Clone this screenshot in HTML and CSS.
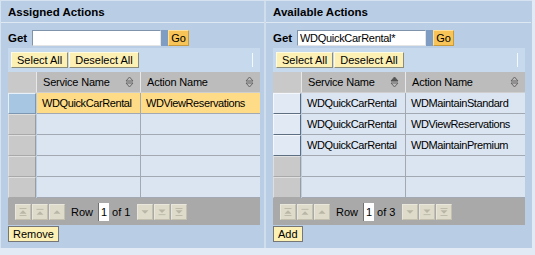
FILE: index.html
```html
<!DOCTYPE html>
<html lang="en">
<head>
    <meta charset="utf-8">
    <title>Service Actions</title>
    <link rel="stylesheet" href="styles.css">
</head>
<body>
<div class="frame">
    <div class="panel left">
        <div class="title">Assigned Actions</div>
        <div class="get">
            <span class="get-label">Get</span>
            <input class="get-input" type="text" value="">
            <span class="go-edge"></span>
            <button class="go">Go</button>
        </div>
        <div class="toolbar">
            <button class="btn">Select All</button>
            <button class="btn">Deselect All</button>
            <span class="tb-sep"></span>
        </div>
        <div class="grid">
            <div class="hd sel"></div>
            <div class="hd">Service Name <svg class="sort" viewBox="0 0 9 12"><path d="M1 5 L4.5 1 L8 5 Z" fill="none" stroke="#666"/><path d="M1 7 L4.5 11 L8 7 Z" fill="none" stroke="#666"/></svg></div>
            <div class="hd last">Action Name <svg class="sort" viewBox="0 0 9 12"><path d="M1 5 L4.5 1 L8 5 Z" fill="none" stroke="#666"/><path d="M1 7 L4.5 11 L8 7 Z" fill="none" stroke="#666"/></svg></div>

            <div class="sel picked"></div><div class="cell hi">WDQuickCarRental</div><div class="cell hi last">WDViewReservations</div>
            <div class="sel"></div><div class="cell"></div><div class="cell last"></div>
            <div class="sel"></div><div class="cell"></div><div class="cell last"></div>
            <div class="sel"></div><div class="cell"></div><div class="cell last"></div>
            <div class="sel"></div><div class="cell"></div><div class="cell last"></div>
        </div>
        <div class="pager">
            <span class="pbtn"><svg viewBox="0 0 16 16"><path d="M4 4h8M4 12h8" stroke="#b9b6a6"/><path d="M4 10 L8 6 L12 10 Z" fill="#b9b6a6"/></svg></span>
            <span class="pbtn"><svg viewBox="0 0 16 16"><path d="M4 5h8" stroke="#b9b6a6"/><path d="M4 11 L8 7 L12 11 Z" fill="#b9b6a6"/></svg></span>
            <span class="pbtn"><svg viewBox="0 0 16 16"><path d="M4 10 L8 6 L12 10 Z" fill="#b9b6a6"/></svg></span>
            <span class="row-label">Row</span>
            <span class="row-num">1</span>
            <span class="row-of">of 1</span>
            <span class="pbtn"><svg viewBox="0 0 16 16"><path d="M4 6 L8 10 L12 6 Z" fill="#b9b6a6"/></svg></span>
            <span class="pbtn"><svg viewBox="0 0 16 16"><path d="M4 11h8" stroke="#b9b6a6"/><path d="M4 5 L8 9 L12 5 Z" fill="#b9b6a6"/></svg></span>
            <span class="pbtn"><svg viewBox="0 0 16 16"><path d="M4 4h8M4 12h8" stroke="#b9b6a6"/><path d="M4 6 L8 10 L12 6 Z" fill="#b9b6a6"/></svg></span>
        </div>
        <button class="btn action">Remove</button>
    </div>

    <div class="panel right">
        <div class="title">Available Actions</div>
        <div class="get">
            <span class="get-label">Get</span>
            <input class="get-input" type="text" value="WDQuickCarRental*">
            <span class="go-edge"></span>
            <button class="go">Go</button>
        </div>
        <div class="toolbar">
            <button class="btn">Select All</button>
            <button class="btn">Deselect All</button>
            <span class="tb-sep"></span>
        </div>
        <div class="grid">
            <div class="hd sel"></div>
            <div class="hd">Service Name <svg class="sort" viewBox="0 0 9 12"><path d="M1 5 L4.5 1 L8 5 Z" fill="#555" stroke="#555"/><path d="M1 7 L4.5 11 L8 7 Z" fill="none" stroke="#666"/></svg></div>
            <div class="hd last">Action Name <svg class="sort" viewBox="0 0 9 12"><path d="M1 5 L4.5 1 L8 5 Z" fill="none" stroke="#666"/><path d="M1 7 L4.5 11 L8 7 Z" fill="none" stroke="#666"/></svg></div>

            <div class="sel live"></div><div class="cell">WDQuickCarRental</div><div class="cell last">WDMaintainStandard</div>
            <div class="sel live"></div><div class="cell">WDQuickCarRental</div><div class="cell last">WDViewReservations</div>
            <div class="sel live"></div><div class="cell">WDQuickCarRental</div><div class="cell last">WDMaintainPremium</div>
            <div class="sel"></div><div class="cell"></div><div class="cell last"></div>
            <div class="sel"></div><div class="cell"></div><div class="cell last"></div>
        </div>
        <div class="pager">
            <span class="pbtn"><svg viewBox="0 0 16 16"><path d="M4 4h8M4 12h8" stroke="#b9b6a6"/><path d="M4 10 L8 6 L12 10 Z" fill="#b9b6a6"/></svg></span>
            <span class="pbtn"><svg viewBox="0 0 16 16"><path d="M4 5h8" stroke="#b9b6a6"/><path d="M4 11 L8 7 L12 11 Z" fill="#b9b6a6"/></svg></span>
            <span class="pbtn"><svg viewBox="0 0 16 16"><path d="M4 10 L8 6 L12 10 Z" fill="#b9b6a6"/></svg></span>
            <span class="row-label">Row</span>
            <span class="row-num">1</span>
            <span class="row-of">of 3</span>
            <span class="pbtn"><svg viewBox="0 0 16 16"><path d="M4 6 L8 10 L12 6 Z" fill="#b9b6a6"/></svg></span>
            <span class="pbtn"><svg viewBox="0 0 16 16"><path d="M4 11h8" stroke="#b9b6a6"/><path d="M4 5 L8 9 L12 5 Z" fill="#b9b6a6"/></svg></span>
            <span class="pbtn"><svg viewBox="0 0 16 16"><path d="M4 4h8M4 12h8" stroke="#b9b6a6"/><path d="M4 6 L8 10 L12 6 Z" fill="#b9b6a6"/></svg></span>
        </div>
        <button class="btn action">Add</button>
    </div>
</div>
</body>
</html>
```

FILE: styles.css
```css
html, body {
    background-color: #e2ebf5;
}
body {
    margin: 0;
    padding: 0;
    font-family: "Liberation Sans", Arial, sans-serif;
    font-size: 11px;
    color: #000;
}
.frame {
    display: flex;
    width: 531px;
    height: 247px;
    background-color: #b9cde5;
    border-top: 1px solid #d6e2ef;
    border-left: 1px solid #d6e2ef;
}
.panel {
    display: flex;
    flex-direction: column;
    align-items: flex-start;
    padding: 0 0 0 7px;
}
.panel.left {
    width: 256px;
    border-right: 2px solid #cfdded;
}
.panel.right {
    width: 258px;
}
.title {
    align-self: stretch;
    height: 21px;
    line-height: 22px;
    margin-left: -7px;
    padding-left: 7px;
    font-weight: bold;
    font-size: 11.5px;
    border-bottom: 1px solid #dde8f3;
}
.get {
    display: flex;
    align-items: center;
    height: 16px;
    margin-top: 7px;
}
.get-label {
    font-weight: bold;
    font-size: 11.5px;
    width: 24px;
}
.get-input {
    box-sizing: border-box;
    width: 129px;
    height: 16px;
    margin: 0;
    padding: 0 2px;
    border: 1px solid #7f93aa;
    border-right-color: #e4e4e4;
    border-bottom-color: #e4e4e4;
    background: #fff;
    font: 11px "Liberation Sans", Arial, sans-serif;
    letter-spacing: -0.3px;
}
.go-edge {
    width: 7px;
    height: 16px;
    background: #7f9cc2;
}
.go {
    box-sizing: border-box;
    width: 21px;
    height: 16px;
    margin: 0;
    padding: 0;
    border: 1px solid #c99a3a;
    border-top-color: #fbe0a0;
    border-left-color: #fbe0a0;
    background: #f8c458;
    font: 11px "Liberation Sans", Arial, sans-serif;
}
.toolbar {
    box-sizing: border-box;
    display: flex;
    align-items: center;
    gap: 1px;
    width: 252px;
    height: 24px;
    margin-top: 2px;
    padding: 0 3px;
    background: #c7d9ec;
}
.tb-sep {
    width: 1px;
    height: 14px;
    margin-left: auto;
    margin-right: 4px;
    background: #f4f8fc;
}
.btn {
    box-sizing: border-box;
    height: 16px;
    margin: 0;
    padding: 0 5px;
    border: 1px solid #8b8b7a;
    border-top-color: #fffbe0;
    border-left-color: #fffbe0;
    background: #fdf0b4;
    font: 11px "Liberation Sans", Arial, sans-serif;
    color: #000;
}
.btn.action {
    margin-top: 1px;
    padding: 0 4px;
    border-color: #767676;
}
.grid {
    display: grid;
    grid-template-columns: 29px 104px 119px;
    grid-auto-rows: 21px;
    width: 252px;
}
.hd {
    display: flex;
    align-items: center;
    padding-left: 6px;
    background: #bcbcbc;
    border-right: 1px solid #e8e8e8;
    border-bottom: 1px solid #cfcfcf;
    letter-spacing: -0.2px;
}
.hd.last {
    border-right: none;
}
.sort {
    width: 9px;
    height: 12px;
    margin-left: auto;
    margin-right: 6px;
}
.cell {
    display: flex;
    align-items: center;
    padding-left: 5px;
    background: #dbe5f1;
    border-right: 1px solid #a2a9b2;
    border-bottom: 1px solid #a2a9b2;
    white-space: nowrap;
    overflow: hidden;
    letter-spacing: -0.4px;
}
.cell.last {
    border-right: none;
}
.cell.hi {
    background: #fedb87;
}
.sel {
    box-sizing: border-box;
    background: #c9c9c9;
    border: 1px solid #dfdfdf;
    border-right-color: #9c9c9c;
    border-bottom-color: #a9a9a9;
    margin-right: 1px;
}
.hd.sel {
    padding: 0;
    border: none;
    border-right: 1px solid #e8e8e8;
    border-bottom: 1px solid #cfcfcf;
    margin-right: 0;
}
.sel.picked {
    background: #a7c6e1;
    border-color: #e7eff8;
    border-right-color: #7d97b3;
    border-bottom-color: #7d97b3;
}
.sel.live {
    background: #e1e9f4;
    border-color: #f4f7fb;
    border-right-color: #5f6f82;
    border-bottom-color: #5f6f82;
}
.pager {
    box-sizing: border-box;
    display: flex;
    align-items: center;
    gap: 1px;
    width: 252px;
    height: 27px;
    padding-left: 7px;
    background: #a9a9a9;
}
.pbtn {
    box-sizing: border-box;
    width: 16px;
    height: 16px;
    background: #dedbcb;
    border: 1px solid #e9e7dc;
    border-right-color: #c3c0b0;
    border-bottom-color: #c3c0b0;
}
.pbtn svg {
    display: block;
    width: 14px;
    height: 14px;
}
.row-label {
    margin-left: 5px;
    margin-right: 4px;
}
.row-num {
    box-sizing: border-box;
    width: 11px;
    height: 18px;
    line-height: 18px;
    padding-left: 2px;
    background: #fff;
    border-left: 1px solid #707070;
}
.row-of {
    margin-left: 2px;
    margin-right: 6px;
}
```
